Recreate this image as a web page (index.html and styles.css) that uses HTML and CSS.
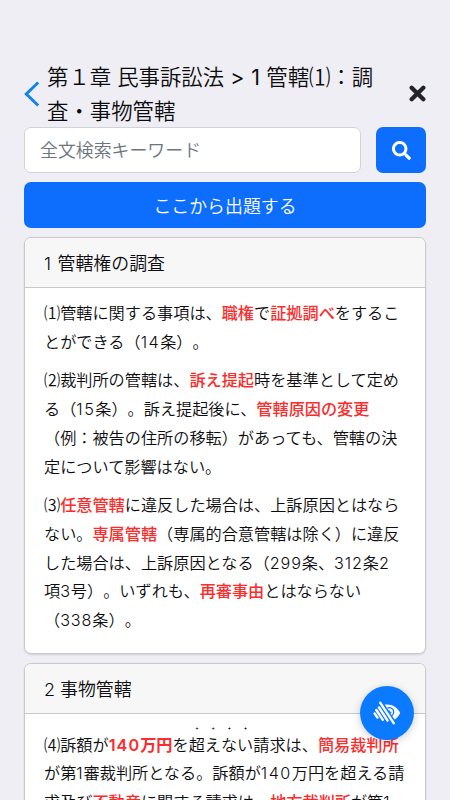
FILE: index.html
```html
<!DOCTYPE html>
<html lang="ja">
<head>
<meta charset="utf-8">
<meta name="viewport" content="width=device-width, initial-scale=1">
<title>民事訴訟法</title>
<link rel="stylesheet" href="styles.css">
</head>
<body>
<main class="page">
  <header class="topbar">
    <svg class="back" viewBox="0 0 16 26"><path d="M14.2 1.5 2.3 13l11.9 11.5"/></svg>
    <h1 class="title">第１章 民事訴訟法 <span class="latin">&gt; 1</span> 管轄⑴：調<br>査・事物管轄</h1>
    <svg class="close" viewBox="0 0 16 16"><path d="M2.500 2.500l11 11M13.500 2.500l-11 11"/></svg>
  </header>
  <form class="search">
    <input class="search-input" type="text" placeholder="全文検索キーワード">
    <button class="search-button" type="button" aria-label="検索">
      <svg viewBox="0 0 512 512"><path d="M505 442.700 405.300 343c-4.500-4.500-10.600-7-17-7H372c27.600-35.300 44-79.700 44-128C416 93.100 322.900 0 208 0S0 93.100 0 208s93.100 208 208 208c48.300 0 92.700-16.400 128-44v16.300c0 6.400 2.500 12.500 7 17l99.700 99.700c9.400 9.400 24.600 9.400 33.900 0l28.300-28.300c9.400-9.400 9.400-24.600.1-34zM208 336c-70.700 0-128-57.200-128-128 0-70.700 57.200-128 128-128 70.700 0 128 57.200 128 128 0 70.700-57.200 128-128 128z"/></svg>
    </button>
  </form>
  <button class="start" type="button">ここから出題する</button>
  <section class="card">
    <h2 class="card-header"><span class="wide">1</span> 管轄権の調査</h2>
    <div class="card-body">
      <p>⑴管轄に関する事項は、<b>職権</b>で<b>証拠調べ</b>をするこ<br>とができる（<span class="wide">14</span>条）。</p>
      <p>⑵裁判所の管轄は、<b>訴え提起</b>時を基準として定め<br>る（<span class="wide">15</span>条）。訴え提起後に、<b>管轄原因の変更</b><br>（例：被告の住所の移転）があっても、管轄の決<br>定について影響はない。</p>
      <p>⑶<b>任意管轄</b>に違反した場合は、上訴原因とはなら<br>ない。<b>専属管轄</b>（専属的合意管轄は除く）に違反<br>した場合は、上訴原因となる（<span class="num">299</span>条、<span class="num">312</span>条<span class="num">2</span><br>項<span class="num">3</span>号）。いずれも、<b>再審事由</b>とはならない<br>（<span class="num">338</span>条）。</p>
    </div>
  </section>
  <section class="card">
    <h2 class="card-header">2 事物管轄</h2>
    <div class="card-body dotted">
      <p>⑷訴額が<b class="amount"><span class="wide">140</span>万円</b>を<span class="dots">超えない</span>請求は、<b>簡易裁判所</b><br>が第<span class="num">1</span>審裁判所となる。訴額が<span class="wide">140</span>万円を超える請<br>求及び<b>不動産</b>に関する請求は、<b>地方裁判所</b>が第<span class="num">1</span></p>
    </div>
  </section>
</main>
<button class="toggle" type="button" aria-label="非表示">
  <svg viewBox="0 0 28 24">
    <path class="eye" d="M10.500 4C17.500 2.300 24 5.500 27.200 12c-1.600 3.300-3.900 5.700-6.700 7.200z"/>
    <path class="ring" d="M14.500 7.200c2.600-1.600 6.200.6 6.200 3.800 0 1.600-.8 3-2 3.900"/>
    <path class="ring" d="M15.800 9.300c.2 1.600 1.300 2.300 2.600 2"/>
    <path class="gap" d="M7.500 2 20.500 22"/>
    <path class="stroke" d="M7.300 1.800 20.700 22.200M6 6.500 14.500 19.500M3.300 9 9.800 18.800M1.600 12.500 4.500 16.600"/>
  </svg>
</button>
</body>
</html>
```

FILE: styles.css
```css
* { box-sizing: border-box; }

html { overflow: hidden; }

body {
  margin: 0;
  height: 800px;
  overflow: hidden;
  background: #efeef4;
  color: #0c0c0e;
  font-family: Inter, "Noto Sans CJK JP", sans-serif;
  font-weight: 350;
  text-spacing-trim: space-all;
  white-space: nowrap;
}

.page { padding: 60px 24px 0; }

.topbar {
  display: flex;
  align-items: center;
  height: 67px;
}

.back { width: 16px; height: 26px; margin-right: 7px; flex: none; }
.back path { fill: none; stroke: #1283ea; stroke-width: 3; }

.title {
  flex: 1;
  margin: 0;
  font-size: 21.4px;
  font-weight: 350;
  line-height: 34px;
}
.latin { font-weight: 400; letter-spacing: .4px; }

.close { width: 17px; height: 17px; flex: none; }
.close path { fill: none; stroke: #212529; stroke-width: 4; stroke-linecap: round; }

.search { display: flex; gap: 15px; height: 46px; }

.search-input {
  flex: 1;
  min-width: 0;
  padding: 0 15px;
  border: 1px solid #ced4da;
  border-radius: 7px;
  background: #fff;
  font: inherit;
  font-size: 17.9px;
}
.search-input::placeholder { color: #6c757d; opacity: 1; }

.search-button {
  display: flex;
  align-items: center;
  justify-content: center;
  width: 50px;
  padding: 0;
  border: 0;
  border-radius: 7px;
  background: #0d6efd;
}
.search-button svg { width: 19px; height: 19px; fill: #fff; }

.start {
  display: block;
  width: 100%;
  height: 46px;
  margin: 9px 0;
  padding: 0;
  border: 0;
  border-radius: 7px;
  background: #0d6efd;
  color: #fff;
  font: inherit;
  font-size: 17.9px;
}

.card {
  margin-bottom: 9px;
  border: 1px solid #c9c9cb;
  border-radius: 7px;
  background: #fff;
  box-shadow: 0 1px 2px rgba(0, 0, 0, .12);
  overflow: hidden;
}

.card-header {
  height: 50px;
  margin: 0;
  padding: 1px 19px 0;
  border-bottom: 1px solid #c9c9cb;
  background: #f7f7f7;
  font-size: 17.9px;
  font-weight: 350;
  line-height: 50px;
}

.card-body { padding: 11px 19px 18px; font-size: 16.17px; line-height: 28.7px; }
.card-body p { margin: 0 0 10px; }
.card-body p:last-child { margin: 0; }
.card-body b { color: #fa2c2c; font-weight: 500; }
.card-body .amount { font-weight: 600; }
.num { letter-spacing: .9px; }
.wide { letter-spacing: 1.5px; }
.amount .wide { letter-spacing: 1.1px; }
.dotted { padding-top: 17px; }

.dots {
  padding-top: 8px;
  background: radial-gradient(circle, #111 0.7px, transparent 1.2px) 0 0 / 16.17px 3px repeat-x;
}

.toggle {
  position: fixed;
  left: 360px;
  top: 686px;
  display: flex;
  align-items: center;
  justify-content: center;
  width: 54px;
  height: 54px;
  padding: 0;
  border: 0;
  border-radius: 50%;
  background: #0a7aff;
  box-shadow: 0 2px 8px rgba(0, 0, 0, .2);
}
.toggle svg { width: 28px; height: 24px; }
.eye { fill: #fff; }
.ring { fill: none; stroke: #0a7aff; stroke-width: 1.3; }
.gap { fill: none; stroke: #0a7aff; stroke-width: 5.5; }
.stroke { fill: none; stroke: #fff; stroke-width: 2.4; stroke-linecap: round; }
```
